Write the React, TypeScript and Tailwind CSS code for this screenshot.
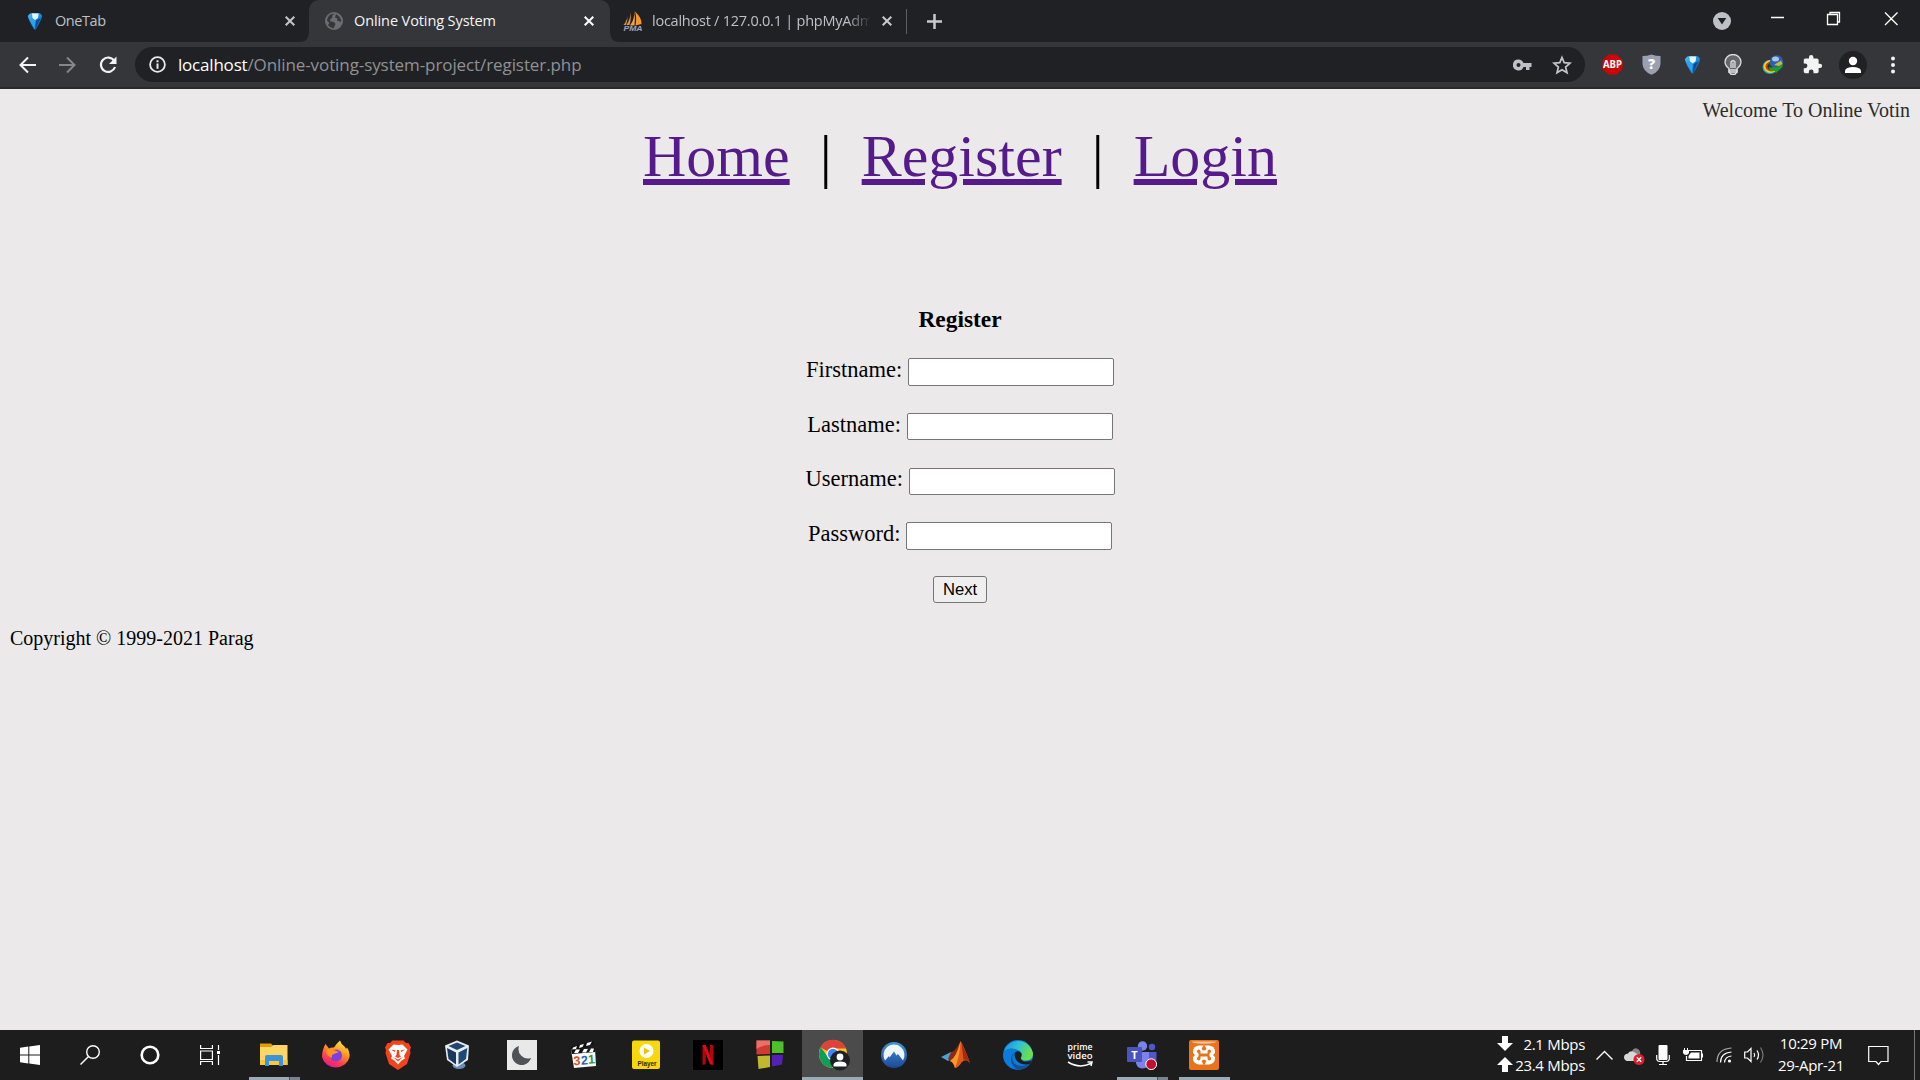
import type { ReactNode } from "react";

const ui = "font-['Open_Sans','Noto_Sans',sans-serif]";

function Cross({ color }: { color: string }) {
  return (
    <svg width="10" height="10" viewBox="0 0 10 10" className="shrink-0" stroke={color} strokeWidth="2">
      <path d="M0.7 0.7L9.3 9.3M9.3 0.7L0.7 9.3" />
    </svg>
  );
}

function Diamond({ size = 18 }: { size?: number }) {
  return (
    <svg width={size} height={size} viewBox="0 0 18 18" className="shrink-0">
      <defs>
        <linearGradient id="gem" x1="0" y1="0" x2="1" y2="1">
          <stop offset="0" stopColor="#4fc0f5" />
          <stop offset="0.5" stopColor="#1a8fe6" />
          <stop offset="1" stopColor="#0a3f8c" />
        </linearGradient>
      </defs>
      <path d="M1.800 4Q3.500 1 6 1H12Q15 1 16.200 4Q15.500 8 9.800 17.500H8.200Q2.500 8 1.800 4Z" fill="url(#gem)" />
      <path d="M6 1.500H12.500L12 6L9 8L6.500 6Z" fill="#e6f6fe" />
      <path d="M6.500 6.500L9 8.500L8.800 17.500L3.500 7.500Z" fill="#2aa4f0" />
      <path d="M10 9L12 7L14.500 6.500L9.300 17Z" fill="#0a4a94" />
    </svg>
  );
}

function Globe() {
  return (
    <svg width="18" height="18" viewBox="0 0 18 18" className="shrink-0">
      <circle cx="9" cy="9" r="9" fill="#6a6d71" />
      <path d="M9.500 1.500L7 4L7.500 5.500L5 7.500L5.500 9.500L9 10L10.500 12L8.500 16.500Q5 16 3 13L4.500 11L2 8.500Q2.500 4 6 2.200ZM11 2L10 5.500L12.500 6.500L12 8.500L16 10Q16.500 5 11 2Z" fill="#36373b" />
    </svg>
  );
}

function PmaIcon() {
  return (
    <svg width="20" height="22" viewBox="0 0 20 22" className="shrink-0">
      <path d="M4.500 5Q4.500 10 0.500 15H3Q5 10 4.500 5Z" fill="#d9932f" />
      <path d="M7.500 2.500Q7.500 9 3.500 15H6.500Q8.500 8 7.500 2.500Z" fill="#e39a35" />
      <path d="M11 0.500Q12 9 7 15.500H11.500Q12.500 7 11 0.500Z" fill="#f2a33a" />
      <path d="M12 1.500Q19 8 18.500 14L12.500 15.500Q14 8 12 1.500Z" fill="#f7962a" />
      <text x="10" y="20.500" textAnchor="middle" textLength="19" lengthAdjust="spacingAndGlyphs" fontFamily="Liberation Sans" fontWeight="bold" fontStyle="italic" fontSize="8" fill="#a5a2c4">PMA</text>
    </svg>
  );
}

function TabStrip() {
  return (
    <div className={`flex h-[42px] bg-[#202124] text-[14.5px] ${ui}`}>
      <div className="flex w-[299px] items-center pl-[26px]">
        <Diamond />
        <span className="ml-[11px] grow tracking-[-0.42px] text-[#bdc1c6]">OneTab</span>
        <Cross color="#c3c6ca" />
        <div className="w-[4px]" />
      </div>
      <div className="flex w-[10px] items-end">
        <svg width="10" height="10"><path d="M0 10Q10 10 10 0V10Z" fill="#35363a" /></svg>
      </div>
      <div className="flex w-[301px] items-center rounded-t-[10px] bg-[#35363a] pl-[16px]">
        <Globe />
        <span className="ml-[11px] grow tracking-[-0.1px] text-[#f4f5f6]">Online Voting System</span>
        <Cross color="#ffffff" />
        <div className="w-[16px]" />
      </div>
      <div className="flex w-[10px] items-end">
        <svg width="10" height="10"><path d="M10 10Q0 10 0 0V10Z" fill="#35363a" /></svg>
      </div>
      <div className="flex w-[287px] items-center pl-[3px]">
        <PmaIcon />
        <div className="ml-[9px] w-[221px] [mask-image:linear-gradient(to_right,black_88%,transparent_99%)]">
          <span className="whitespace-nowrap tracking-[-0.24px] text-[#bdc1c6]">localhost / 127.0.0.1 | phpMyAdm</span>
        </div>
        <div className="ml-[9px] flex"><Cross color="#c8cacd" /></div>
        <div className="ml-[14px] h-[25px] w-px bg-[#5c5e62]" />
      </div>
      <div className="flex w-[55px] items-center justify-center">
        <svg width="15" height="15" stroke="#c8cacd" strokeWidth="2.500"><path d="M7.500 0V15M0 7.500H15" /></svg>
      </div>
      <div className="grow" />
      <div className="flex w-[17px] items-center">
        <svg width="18" height="18" className="shrink-0"><circle cx="9" cy="9" r="9" fill="#bdc1c6" /><path d="M4.700 6H13.300L9 12.500Z" fill="#202124" /></svg>
      </div>
      <svg width="190" height="42" className="shrink-0" fill="none" stroke="#fff" strokeWidth="1.300">
        <path d="M41 17.500H54M97.500 14.500H107.500V24.500H97.500ZM100 14V12.500H109.500V22H108M155 12.500L167.500 25M167.500 12.500L155 25" />
      </svg>
    </div>
  );
}

function Tool({ w, children }: { w: string; children: ReactNode }) {
  return <div className={`flex shrink-0 items-center justify-center ${w}`}>{children}</div>;
}

function Toolbar() {
  return (
    <div className="flex h-[47px] items-center border-b-2 border-[#28292c] bg-[#35363a]">
      <div className="w-[8px]" />
      <Tool w="w-[39px]">
        <svg width="18" height="18" fill="none" stroke="#f1f3f4" strokeWidth="2"><path d="M17 9H2M9 1.500L1.500 9L9 16.500" /></svg>
      </Tool>
      <Tool w="w-[40px]">
        <svg width="18" height="18" fill="none" stroke="#85878a" strokeWidth="2"><path d="M1 9H16M9 1.500L16.500 9L9 16.500" /></svg>
      </Tool>
      <Tool w="w-[41px]">
        <svg width="18" height="18" fill="none" stroke="#f1f3f4" strokeWidth="2.200"><path d="M15.200 4.800A7.200 7.200 0 1 0 16 11" /><path d="M17.500 0.500V8H10Z" fill="#f1f3f4" stroke="none" /></svg>
      </Tool>
      <div className={`ml-[7px] flex h-[35px] w-[1450px] items-center rounded-full bg-[#202124] pl-[14px] text-[17px] ${ui}`}>
        <svg width="17" height="17" viewBox="0 0 17 17"><circle cx="8.500" cy="8.500" r="7.400" fill="none" stroke="#e8eaed" strokeWidth="1.800" /><path d="M8.500 7.500V12.700M8.500 4.200V6.200" stroke="#e8eaed" strokeWidth="2" /></svg>
        <span className="ml-[12px] grow whitespace-nowrap tracking-[-0.09px] text-[#8f9194]"><span className="tracking-[-0.2px] text-white">localhost</span>/Online-voting-system-project/register.php</span>
        <svg width="19" height="12" viewBox="0 0 19 12" className="mr-[20px]"><path fillRule="evenodd" d="M5.500 0.500A5.500 5.500 0 1 0 10.500 8H13V11H16.500V8H18.500V4H10.500A5.500 5.500 0 0 0 5.500 0.500ZM5.500 4A2 2 0 1 1 5.500 8A2 2 0 0 1 5.500 4Z" fill="#bdc1c6" /></svg>
        <svg width="20" height="20" viewBox="0 0 20 20" className="mr-[13px]" fill="none" stroke="#c4c7ca" strokeWidth="1.700"><path d="M10 2.500L12.200 7.700L18 8.200L13.600 12L15 17.700L10 14.700L5 17.700L6.400 12L2 8.200L7.800 7.700Z" /></svg>
      </div>
      <div className="w-[8px]" />
      <Tool w="w-[39px]">
        <svg width="21" height="21" viewBox="0 0 21 21"><path d="M6.300 0.500H14.700L20.500 6.300V14.700L14.700 20.500H6.300L0.500 14.700V6.300Z" fill="#cc0606" /><text x="10.500" y="14.300" textAnchor="middle" textLength="19" lengthAdjust="spacingAndGlyphs" fontFamily="Open Sans" fontWeight="700" fontSize="10.500" fill="#fff">ABP</text></svg>
      </Tool>
      <Tool w="w-[39px]">
        <svg width="19" height="21" viewBox="0 0 19 21"><path d="M9.500 0.500Q14 2 18.500 2V10Q18 17.500 9.500 20.800Q1 17.500 0.500 10V2Q5 2 9.500 0.500Z" fill="#9aa0b0" /><text x="9.500" y="15" textAnchor="middle" fontFamily="Open Sans" fontWeight="800" fontSize="14" fill="#fff">?</text></svg>
      </Tool>
      <Tool w="w-[42px]"><Diamond size={19} /></Tool>
      <Tool w="w-[40px]">
        <svg width="18" height="21" viewBox="0 0 18 21" fill="none" stroke="#dcdddf" strokeWidth="1.300"><path d="M5 14.500Q1 11.500 1 8A8 7.500 0 0 1 17 8Q17 11.500 13 14.500V18L11 20.300H7L5 18Z" fill="#66676b" /><path d="M5 16H13V18H5ZM7 14V8Q9 5.500 11 8V14M9 8.500V14" /></svg>
      </Tool>
      <Tool w="w-[39px]">
        <svg width="22" height="20" viewBox="0 0 22 20"><ellipse cx="8" cy="12" rx="7.500" ry="7" fill="#1d9fe0" /><ellipse cx="8.500" cy="11.500" rx="7" ry="6.500" fill="#e9d51b" /><ellipse cx="9.500" cy="11.500" rx="6" ry="5" fill="#d63a1d" /><ellipse cx="10.500" cy="11.500" rx="5" ry="4" fill="#1d3f20" /><circle cx="14.500" cy="7" r="6.800" fill="#315db0" /><ellipse cx="13.500" cy="4" rx="3.500" ry="2.500" fill="#a9c6e4" /><path d="M15 8L19 5.500L20.500 9L17 11L12 10Z" fill="#b9bf3a" /><path d="M7 12Q13 14 21 9.500L20.500 12L13.500 18.500V16L8 16Z" fill="#219d27" /></svg>
      </Tool>
      <Tool w="w-[41px]">
        <svg width="21" height="21" viewBox="0 0 24 24" fill="#f1f3f4"><path d="M20.500 11H19V7c0-1.100-.9-2-2-2h-4V3.500a2.500 2.500 0 0 0-5 0V5H4c-1.100 0-2 .9-2 2v3.800h1.500a2.700 2.700 0 0 1 0 5.400H2V20c0 1.100.9 2 2 2h3.800v-1.500a2.700 2.700 0 0 1 5.400 0V22H17c1.100 0 2-.9 2-2v-4h1.500a2.500 2.500 0 0 0 0-5z" /></svg>
      </Tool>
      <Tool w="w-[40px]">
        <svg width="28" height="28"><circle cx="14" cy="14" r="14" fill="#202124" /><circle cx="14" cy="10" r="4.200" fill="#fff" /><path d="M6 22V19.500Q7 16 14 16T22 19.500V22Z" fill="#fff" /></svg>
      </Tool>
      <Tool w="w-[39px]">
        <svg width="6" height="18" fill="#f1f3f4"><circle cx="3" cy="2.500" r="2" /><circle cx="3" cy="9" r="2" /><circle cx="3" cy="15.500" r="2" /></svg>
      </Tool>
    </div>
  );
}

const navLink = "text-[#551a8b] underline decoration-[6px] underline-offset-[3px]";

function Page() {
  return (
    <main className="h-[941px] bg-[#ebe9ea] px-[10px] pt-[10px] font-['Liberation_Serif',serif] text-black">
      <div className="h-[24px] text-right text-[20px] leading-[23px] text-[#2c2c2c]">Welcome To Online Votin</div>
      <nav className="h-[183px] text-center text-[60px] leading-[67px] whitespace-pre">
        <a className={navLink}>Home</a>{"\u00a0\u00a0|\u00a0\u00a0"}<a className={navLink}>Register</a>{"\u00a0\u00a0|\u00a0\u00a0"}<a className={navLink}>Login</a>
      </nav>
      <h3 className="mb-[25px] text-center text-[23.4px] leading-[26px] font-bold">Register</h3>
      <form className="flex flex-col items-center">
        {["Firstname:", "Lastname:", "Username:", "Password:"].map((label) => (
          <label key={label} className="flex h-[54.6px] items-start gap-[5.6px] text-[22.5px] leading-[25px]">
            {label}
            <input className="mt-[1.4px] h-[27.4px] w-[206px] rounded-[2px] border border-[#767676] bg-white" />
          </label>
        ))}
        <button type="button" className="mt-[0.6px] h-[27px] w-[54px] rounded-[3px] border border-[#767676] bg-[#efefef] pt-[1px] font-['Liberation_Sans',sans-serif] text-[16.67px] leading-[24px]">Next</button>
      </form>
      <footer className="mt-[23px] text-[20px] leading-[24px]">Copyright © 1999-2021 Parag</footer>
    </main>
  );
}

function App62({ children, line = "" }: { children: ReactNode; line?: "" | "one" | "many" | "active" }) {
  return (
    <div className={`flex w-[62px] shrink-0 flex-col items-center ${line === "active" ? "bg-[linear-gradient(to_right,transparent_1px,#4b4b4b_1px)]" : ""}`}>
      <div className="flex h-[47px] items-center pt-[3px]">{children}</div>
      {line === "one" && <div className="h-[3px] w-[51px] bg-[#9aabb8]" />}
      {line === "active" && <div className="h-[3px] w-[61px] self-end bg-[#9aabb8]" />}
      {line === "many" && (
        <div className="flex h-[3px] w-[51px]">
          <div className="w-[40px] bg-[#9aabb8]" />
          <div className="grow border-l border-[#4b545c] bg-[#77838e]" />
        </div>
      )}
    </div>
  );
}

function Icon({ children, size = 30 }: { children: ReactNode; size?: number }) {
  return <svg width={size} height={size} viewBox="0 0 30 30">{children}</svg>;
}

function Cell({ w, children }: { w: string; children: ReactNode }) {
  return <div className={`flex shrink-0 items-center justify-center ${w}`}>{children}</div>;
}

function Taskbar() {
  return (
    <div className={`flex h-[50px] bg-[#1d1d1d] text-white ${ui}`}>
      <Cell w="w-[60px]">
        <svg width="20" height="20" fill="#fff"><path d="M0 2.800L8.300 1.600V9.500H0ZM9.300 1.500L20 0V9.500H9.300ZM0 10.500H8.300V18.400L0 17.200ZM9.300 10.500H20V20L9.300 18.500Z" /></svg>
      </Cell>
      <Cell w="w-[60px]">
        <svg width="20" height="20" fill="none" stroke="#fff" strokeWidth="1.400"><circle cx="13" cy="7" r="6.300" /><path d="M8.500 11.500L0.500 19.500" /></svg>
      </Cell>
      <Cell w="w-[60px]">
        <svg width="20" height="20" fill="none" stroke="#fff" strokeWidth="2.600"><circle cx="10" cy="10" r="8.300" /></svg>
      </Cell>
      <Cell w="w-[60px]">
        <svg width="20" height="20" fill="none" stroke="#fff" strokeWidth="1.200"><path d="M0.600 0V3.500H12.400V0M0.600 6H12.400V14.500H0.600ZM0.600 20V16.500H12.400V20M18.500 0V5M18.500 10V20" /><path d="M17 6H20V9H17Z" fill="#fff" stroke="none" /></svg>
      </Cell>
      <div className="w-[3px]" />
      <App62 line="many">
        <Icon><path d="M1 3.500H12L14 5.500V10H1Z" fill="#dfa000" /><path d="M1 7H12L14.500 5H28.500V25H1Z" fill="#ffd563" /><path d="M1 20H28.500V25H1Z" fill="#f8c73c" /><path d="M6 26V17Q6 15 8 15H22Q24 15 24 17V26H20V21H10V26Z" fill="#3c93d8" /></Icon>
      </App62>
      <App62>
        <Icon>
          <defs><linearGradient id="fox" x1="0.800" y1="0" x2="0.300" y2="1"><stop offset="0" stopColor="#fff04a" /><stop offset="0.400" stopColor="#ff9a22" /><stop offset="0.750" stopColor="#ff3b52" /><stop offset="1" stopColor="#e3198b" /></linearGradient></defs>
          <path d="M4.500 4L8 8.500Q10 7 13 7.500Q15 4 19 0.500Q20 4 23 6Q24.500 7.500 25 9L26 7.500Q29 12 28.500 17A14 12.800 0 0 1 1 17Q1 10 4.500 4Z" fill="url(#fox)" />
          <circle cx="15" cy="15.500" r="6" fill="#7d3fe0" /><path d="M5 11Q8 7 14 10.500L18 12L13 14Q10 14.500 11 18Q5 16 5 11Z" fill="#ff9423" />
        </Icon>
      </App62>
      <App62>
        <Icon>
          <path d="M9.500 0.500H20.500L23 3L25.500 3L28 7.500L27 10L27.500 13L24 24L15 30L6 24L2.500 13L3 10L2 7.500L4.500 3H7Z" fill="#f4431c" />
          <path d="M15 5L19.500 4.500L24.500 9.500L21 16L22 18.500L18.500 20.500L15 24.500L11.500 20.500L8 18.500L9 16L5.500 9.500L10.500 4.500Z" fill="#fff" />
          <path d="M8 9.500L12.500 10.500L11.500 12ZM22 9.500L17.500 10.500L18.500 12ZM14 10H16L16.500 15L18 16.500L15 18L12 16.500L13.500 15ZM10 17L15 19.500L20 17L15 21.500Z" fill="#f4431c" />
        </Icon>
      </App62>
      <App62>
        <div className="mr-[4px]">
          <Icon>
            <ellipse cx="16" cy="25.500" rx="6.500" ry="3.500" fill="#6a8cb8" /><path d="M14 0.500L26 5.500L25 20L14 27L4 20L2 5.500Z" fill="#e7edf4" />
            <path d="M14 2.500L22.500 6L14 10L5.500 6Z" fill="#23446c" /><path d="M4 8L13 12.500V24.500L5.500 19Z" fill="#17375f" /><path d="M24.300 8L15.500 12.500V24.500L23 19Z" fill="#1e4878" />
          </Icon>
        </div>
      </App62>
      <App62><Icon><path d="M0 0H30V30H0Z" fill="#e9e9e9" /><path d="M12 6A9.700 9.700 0 1 0 24 18A9.500 9.500 0 0 1 12 6Z" fill="#505257" /></Icon></App62>
      <App62>
        <Icon>
          <path d="M2 7L24 1L25 4.500L3 11Z" fill="#111" /><path d="M4 7.500L8 6L7 9L3 10ZM11 5L15 4L13.500 7L10 8ZM18 3L23 1.500L21 5L17 6Z" fill="#fff" />
          <path d="M2 9.500L26 8.500L27 26L5 28Z" fill="#fafafa" /><path d="M2 9.500L26 8L26.200 12L3 14Z" fill="#111" /><path d="M7 9.500H11L9 13H5ZM15 9H19L17 12.500H13ZM22 8.500H25L24 12H20Z" fill="#fff" />
          <g fontFamily="Liberation Sans" fontWeight="bold" fontSize="12.500" transform="rotate(-4 15 20)"><text x="4.500" y="24.500" fill="#d9541e">3</text><text x="12" y="24.500" fill="#1f67b5">2</text><text x="19" y="24" fill="#2f9a35">1</text></g>
        </Icon>
      </App62>
      <App62><Icon><rect x="1" y="0.500" width="28" height="28.500" rx="2" fill="#f8d80d" /><circle cx="15.500" cy="11" r="7" fill="#fff" /><path d="M13 7.500L19 11L13 14.500Z" fill="#f0c400" /><text x="16" y="25.500" textAnchor="middle" textLength="19" lengthAdjust="spacingAndGlyphs" fontFamily="Liberation Sans" fontWeight="bold" fontSize="7" fill="#2e2a10">Player</text></Icon></App62>
      <App62><Icon><path d="M0 0H30V30H0Z" fill="#000" /><path d="M9.500 5H12.800V24.300L9.500 24.800ZM17 5H20.300V24.800L17 24.300Z" fill="#b1060f" /><path d="M9.500 5H12.800L20.300 24.800L17 24.300Z" fill="#e50914" /></Icon></App62>
      <App62><Icon><path d="M1.500 0.500H15V14L1.500 14.500Z" fill="#d13a30" /><path d="M17 1L28.500 1.500V13H17Z" fill="#4cc12c" /><path d="M2.500 16L15 15.500V27L3.500 29Z" fill="#c0b930" /><path d="M17 15H28L27 24.500L17 26.500Z" fill="#5420b5" /><path d="M1.500 0.500H15V5Q7 5 1.500 9Z" fill="#e77068" /></Icon></App62>
      <App62 line="active">
        <svg width="32" height="32" viewBox="0 0 32 32" className="ml-[3px]">
          <circle cx="15" cy="15" r="14" fill="#f9c826" /><path d="M15 15L2.500 8.500A14 14 0 0 1 28 9.500H15Z" fill="#db4437" /><path d="M2.800 8.200A14 14 0 0 0 14 29L20 18L10 18Z" fill="#109d58" />
          <circle cx="15" cy="15" r="6.500" fill="#fff" /><circle cx="15" cy="15" r="5.200" fill="#4285f4" />
          <circle cx="22" cy="21.500" r="10" fill="#202124" /><circle cx="22" cy="18" r="3.400" fill="#fff" /><path d="M15.500 27.500V25.500Q16 22.500 22 22.500T28.500 25.500V27.500Z" fill="#fff" />
        </svg>
      </App62>
      <App62><Icon><defs><linearGradient id="nord" x1="0" y1="0" x2="0" y2="1"><stop offset="0" stopColor="#3f97d8" /><stop offset="1" stopColor="#1d4896" /></linearGradient></defs><circle cx="15" cy="15" r="13" fill="url(#nord)" /><path d="M6 20.500A10.500 10.500 0 1 1 24 20.500L19 14L17.500 15.500L15 11.500L10.500 17.500L10 16Z" fill="#eef5fc" /></Icon></App62>
      <App62><Icon><path d="M0 17L10 12L14 17L7 21Z" fill="#4aa3d8" /><path d="M10 12Q14 12 19 2L16 18L11 22L7 19Z" fill="#8b2a1b" /><path d="M19.500 1Q23 6 29 23Q25 18 21 22Q17 28 14 28Q13 23 9 21Q15 18 19.500 1Z" fill="#e4571a" /><path d="M19.500 1Q19 16 14 28Q12 21 9 21Q16 17 19.500 1Z" fill="#f59a25" /><path d="M20.500 3Q23 7 29 23Q25 18 22.500 20Z" fill="#a52a14" /></Icon></App62>
      <App62>
        <Icon>
          <defs><linearGradient id="edge" x1="0" y1="0" x2="1" y2="0.300"><stop offset="0" stopColor="#1b8fe0" /><stop offset="0.500" stopColor="#2cc0d8" /><stop offset="1" stopColor="#6be04a" /></linearGradient></defs>
          <circle cx="15" cy="15" r="15" fill="#0d7bd8" /><path d="M1 11A15 15 0 0 1 30 14Q30 20 23 20.500Q17 20.500 18 17Q20 12 15 10Q7 6 1 11Z" fill="url(#edge)" />
          <path d="M12 12Q7 17 11 23Q16 28 26 24.500A15 15 0 0 1 15 30Q9 27 8 20Q8 14 12 12Z" fill="#134f9d" /><path d="M12.500 12Q16 10 18.500 13.500Q19 16 17.800 17.500Q17.500 20 21 21.500Q26 22 29 20L27 24Q19 26 14 21Q10 16 12.500 12Z" fill="#1d1d1d" />
        </Icon>
      </App62>
      <App62><Icon><g fontFamily="Open Sans" fontWeight="600" fontSize="9.500" fill="#fff" textAnchor="middle"><text x="15" y="9.500" textLength="25" lengthAdjust="spacingAndGlyphs">prime</text><text x="15" y="19" textLength="25" lengthAdjust="spacingAndGlyphs">video</text></g><path d="M3 22Q14 29 26 23.500M22.500 22L27 22L26 26" fill="none" stroke="#fff" strokeWidth="1.500" /></Icon></App62>
      <App62 line="many">
        <Icon><circle cx="15.500" cy="6" r="4.700" fill="#7b83eb" /><circle cx="25" cy="7" r="3.200" fill="#5059c9" /><path d="M19 12H29.500V20Q29 24 24 24Z" fill="#5059c9" /><path d="M9 12H22V23Q20 28.500 15 28.500Q10 28 9 23Z" fill="#7b83eb" /><rect x="0" y="7" width="15" height="15" rx="1" fill="#4b53bc" /><text x="7.500" y="18.500" textAnchor="middle" fontFamily="Open Sans" fontWeight="bold" fontSize="11" fill="#fff">T</text><circle cx="24.200" cy="24.200" r="5.400" fill="#c50f2e" stroke="#fff" strokeWidth="1" /></Icon>
      </App62>
      <App62 line="one">
        <Icon>
          <rect width="30" height="30" rx="2" fill="#e8731c" /><path d="M3 1.500H27Q27 3.500 15 3.800Q3 3.500 3 1.500Z" fill="#f9c39a" />
          <rect x="4" y="5.500" width="22" height="19" rx="6" fill="#fff" />
          <path d="M15 4.500L17.500 9Q16 10.500 15 10.500Q14 10.500 12.500 9ZM15 25.500L17.500 21Q16 19.500 15 19.500Q14 19.500 12.500 21ZM3.500 12.500L6 15L3.500 17.500ZM26.500 12.500L24 15L26.500 17.500Z" fill="#e8731c" />
          <path d="M9.500 9.500Q11.500 9.500 11.500 11.500V13.500H18.500V11.500Q18.500 9.500 20.500 9.500Q22.500 10 22 12L20.500 13.500V16L22 18Q22.500 20 20.500 20.500Q18.500 20.500 18.500 18.500V16.500H11.500V18.500Q11.500 20.500 9.500 20.500Q7.500 20 8 18L9.500 16V13.500L8 12Q7.500 10 9.500 9.500Z" fill="#e8731c" />
        </Icon>
      </App62>
      <div className="grow" />
      <div className="flex w-[15px] flex-col justify-center gap-[6px] pb-[3px]">
        <svg width="16" height="15" fill="#fff"><path d="M5 0H11V7H16L8 15L0 7H5Z" /></svg>
        <svg width="16" height="15" fill="#fff"><path d="M5 15H11V8H16L8 0L0 8H5Z" /></svg>
      </div>
      <div className="w-[73px] pt-[4px] text-right text-[15px] leading-[21px] tracking-[-0.3px] whitespace-nowrap">
        <div>2.1 Mbps</div>
        <div>23.4 Mbps</div>
      </div>
      <Cell w="w-[38px]"><svg width="17" height="10" fill="none" stroke="#fff" strokeWidth="1.400"><path d="M0.500 9.500L8.500 1.500L16.500 9.500" /></svg></Cell>
      <Cell w="w-[22px]">
        <svg width="21" height="19" className="mt-[2px]"><path d="M8 11V4Q10 0 14 2Q17 4 16 9V12H8Z" fill="#858585" /><path d="M3 14Q0 13 0 10Q0 7 4 6.500Q6 3 10 5L15 8L12 14Z" fill="#d7d7d7" /><circle cx="15" cy="12.500" r="5.500" fill="#d9202e" /><path d="M12.800 10.300L17.200 14.700M17.200 10.300L12.800 14.700" stroke="#fff" strokeWidth="1.300" /></svg>
      </Cell>
      <Cell w="w-[36px]"><svg width="14" height="20"><rect x="2.500" y="0" width="9" height="15" rx="1" fill="#fff" /><path d="M0.700 10V14Q1 16.500 4 16.500H10Q13 16.500 13.300 14V10M7 17V19.500M3 19.500H11" fill="none" stroke="#fff" strokeWidth="1.200" /></svg></Cell>
      <Cell w="w-[24px]"><svg width="20" height="14"><path d="M6 2.500H18.500V12.500H3.500V8M19.500 5.500V9.500" fill="none" stroke="#fff" strokeWidth="1.200" /><path d="M8 4.500H16.500V10.500H5.500V8ZM0 2H6V5Q5 7 3 7Q1 7 0 5ZM1 0H2V2H1ZM4 0H5V2H4Z" fill="#fff" /></svg></Cell>
      <Cell w="w-[38px]"><svg width="17" height="17" fill="none" strokeWidth="1.200"><path d="M1 15Q1 2 15.500 1" stroke="#aaa" /><path d="M4.500 15.500Q4.500 6 15.500 5M8.500 15.500Q9 9.500 15.500 9" stroke="#fff" /><circle cx="13.500" cy="14" r="1.600" fill="#fff" /></svg></Cell>
      <Cell w="w-[22px]"><svg width="21" height="18" fill="none" stroke="#fff" strokeWidth="1.200"><path d="M0.700 6H3.500L7 2.500V15.500L3.500 12H0.700ZM10 7Q11.500 9 10 11M13 4.500Q16 9 13 13.500" /><path d="M16.500 1.500Q21.500 9 16.500 16.500" stroke="#777" /></svg></Cell>
      <div className="w-[90px] pt-[2px] pl-[2px] text-center text-[15px] leading-[22px] tracking-[-0.3px] whitespace-nowrap">
        <div>10:29 PM</div>
        <div>29-Apr-21</div>
      </div>
      <Cell w="w-[44px]"><svg width="21" height="21" fill="none" stroke="#fff" strokeWidth="1.200" className="ml-[2px]"><path d="M0.700 1.500H20V16.500H13L10.500 19.500L8 16.500H0.700Z" /></svg></Cell>
      <div className="ml-[15px] h-full w-[6px] border-l border-[#777]" />
    </div>
  );
}

export default function App() {
  return (
    <div className="flex h-[1080px] w-[1920px] flex-col overflow-hidden">
      <TabStrip />
      <Toolbar />
      <Page />
      <Taskbar />
    </div>
  );
}
